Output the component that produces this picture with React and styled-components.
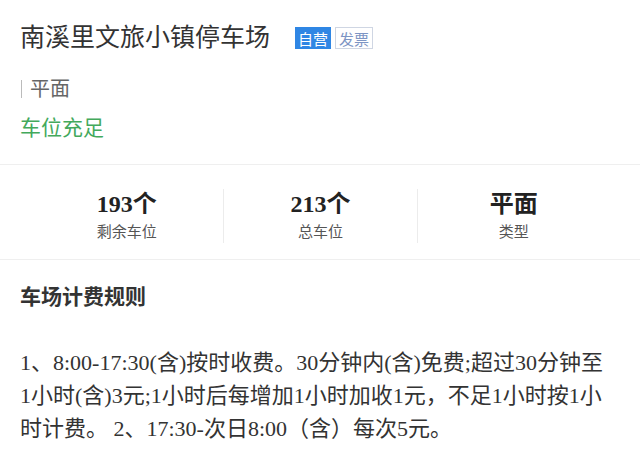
import React from "react";
import styled, { createGlobalStyle } from "styled-components";

const GlobalStyle = createGlobalStyle`
  html, body {
    margin: 0;
    padding: 0;
    background: #ffffff;
  }
  body {
    font-family: "Liberation Serif", "Noto Sans CJK SC", serif;
    color: #333333;
  }
`;

const Page = styled.div`
  width: 640px;
  height: 453px;
  overflow: hidden;
  background: #ffffff;
`;

const Header = styled.div`
  padding: 20px 20px 22px;
  border-bottom: 1px solid #efefef;
`;

const TitleRow = styled.div`
  display: flex;
  align-items: center;
  height: 36px;
`;

const Title = styled.h1`
  margin: 0;
  font-size: 25px;
  font-weight: normal;
  line-height: 36px;
  color: #333333;
`;

const Tags = styled.div`
  display: flex;
  gap: 4px;
  margin-left: 25px;
`;

const Tag = styled.span`
  display: inline-flex;
  align-items: center;
  height: 22px;
  padding: 0 ${(p) => (p.$solid ? "2px" : "3px")};
  box-sizing: border-box;
  font-family: "Noto Sans CJK SC", sans-serif;
  font-size: 15px;
  color: ${(p) => (p.$solid ? "#ffffff" : "#7d95c4")};
  background: ${(p) => (p.$solid ? "#2f86e4" : "#ffffff")};
  border: 1px solid ${(p) => (p.$solid ? "#2f86e4" : "#cfd6e3")};
`;

const TypeLine = styled.div`
  margin-top: 19px;
  display: flex;
  align-items: center;
  font-size: 20px;
  line-height: 28px;
  color: #666666;
`;

const Bar = styled.span`
  display: inline-block;
  width: 1px;
  height: 18px;
  background: #bbbbbb;
  margin: 0 8px 0 1px;
`;

const Status = styled.div`
  margin-top: 11px;
  font-size: 21px;
  line-height: 28px;
  color: #43a95c;
`;

const Stats = styled.div`
  display: grid;
  grid-template-columns: repeat(3, 1fr);
  padding: 24px 30px 16px;
  border-bottom: 1px solid #efefef;
`;

const Stat = styled.div`
  display: flex;
  flex-direction: column;
  align-items: center;
  border-left: ${(p) => (p.$first ? "none" : "1px solid #ececec")};
`;

const StatValue = styled.div`
  font-size: 24px;
  font-weight: bold;
  line-height: 30px;
  color: #222222;
`;

const StatLabel = styled.div`
  margin-top: 2px;
  font-size: 15px;
  line-height: 22px;
  color: #555555;
`;

const Rules = styled.div`
  padding: 22px 30px 0 20px;
`;

const RulesTitle = styled.h2`
  margin: 0;
  font-size: 21px;
  font-weight: bold;
  line-height: 30px;
  color: #333333;
`;

const RulesText = styled.p`
  margin: 34px 0 0;
  font-size: 22px;
  line-height: 33px;
  color: #333333;
`;

const stats = [
  { value: "193个", label: "剩余车位" },
  { value: "213个", label: "总车位" },
  { value: "平面", label: "类型" },
];

export default function App() {
  return (
    <Page>
      <GlobalStyle />
      <Header>
        <TitleRow>
          <Title>南溪里文旅小镇停车场</Title>
          <Tags>
            <Tag $solid>自营</Tag>
            <Tag>发票</Tag>
          </Tags>
        </TitleRow>
        <TypeLine>
          <Bar />
          平面
        </TypeLine>
        <Status>车位充足</Status>
      </Header>
      <Stats>
        {stats.map((s, i) => (
          <Stat key={s.label} $first={i === 0}>
            <StatValue>{s.value}</StatValue>
            <StatLabel>{s.label}</StatLabel>
          </Stat>
        ))}
      </Stats>
      <Rules>
        <RulesTitle>车场计费规则</RulesTitle>
        <RulesText>
          1、8:00-17:30(含)按时收费。30分钟内(含)免费;超过30分钟至1小时(含)3元;1小时后每增加1小时加收1元，不足1小时按1小时计费。 2、17:30-次日8:00（含）每次5元。
        </RulesText>
      </Rules>
    </Page>
  );
}
